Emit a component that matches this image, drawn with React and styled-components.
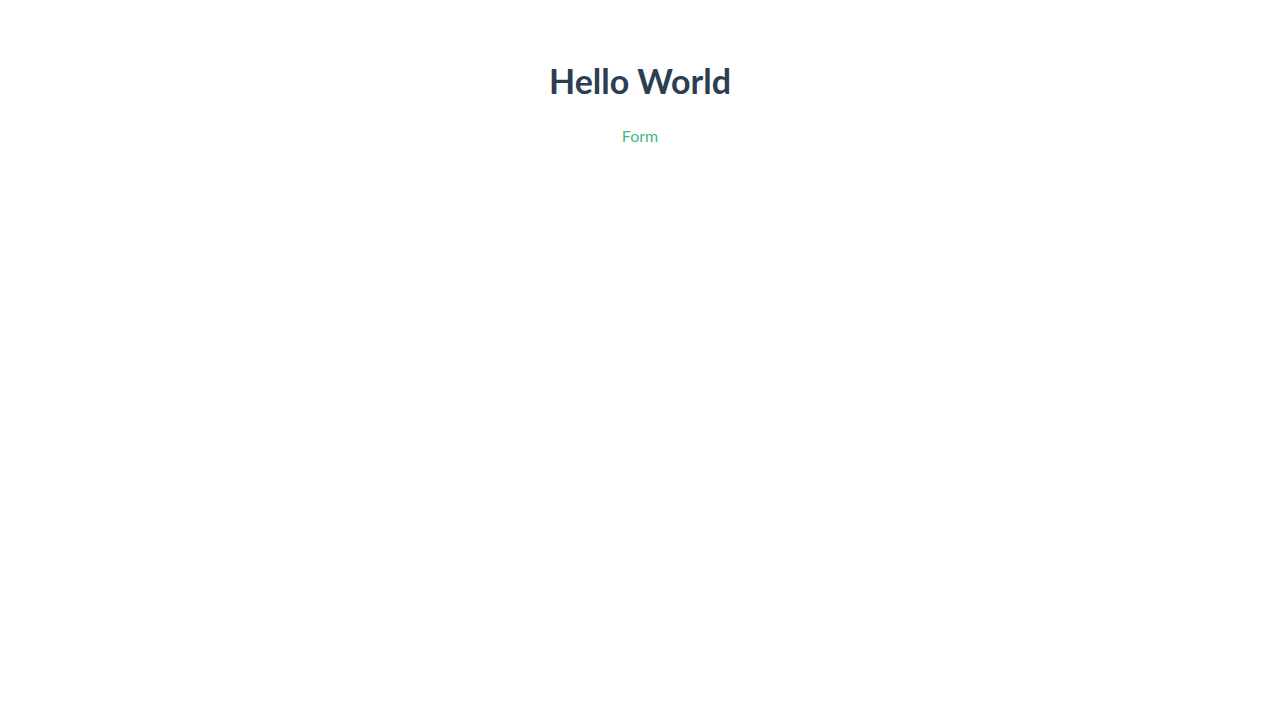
import styled, { createGlobalStyle } from "styled-components";

const Global = createGlobalStyle`
  body {
    margin: 0;
    background: #ffffff;
    font-family: 'Lato', 'Noto Sans', sans-serif;
    -webkit-font-smoothing: antialiased;
  }
`

const Page = styled.div`
  display: flex;
  flex-direction: column;
  align-items: center;
  padding-top: 58px;
`

const Title = styled.h1`
  margin: 0;
  font-size: 34px;
  font-weight: 700;
  color: #2c3e50;
  line-height: 46px;
`

const Nav = styled.nav`
  margin-top: 22px;
  a {
    color: #42b983;
    font-size: 16px;
    font-weight: 400;
    text-decoration: none;
  }
`

export default function App() {
  return (
    <>
      <Global />
      <Page>
        <Title>Hello World</Title>
        <Nav>
          <a href="#form">Form</a>
        </Nav>
      </Page>
    </>
  )
}
